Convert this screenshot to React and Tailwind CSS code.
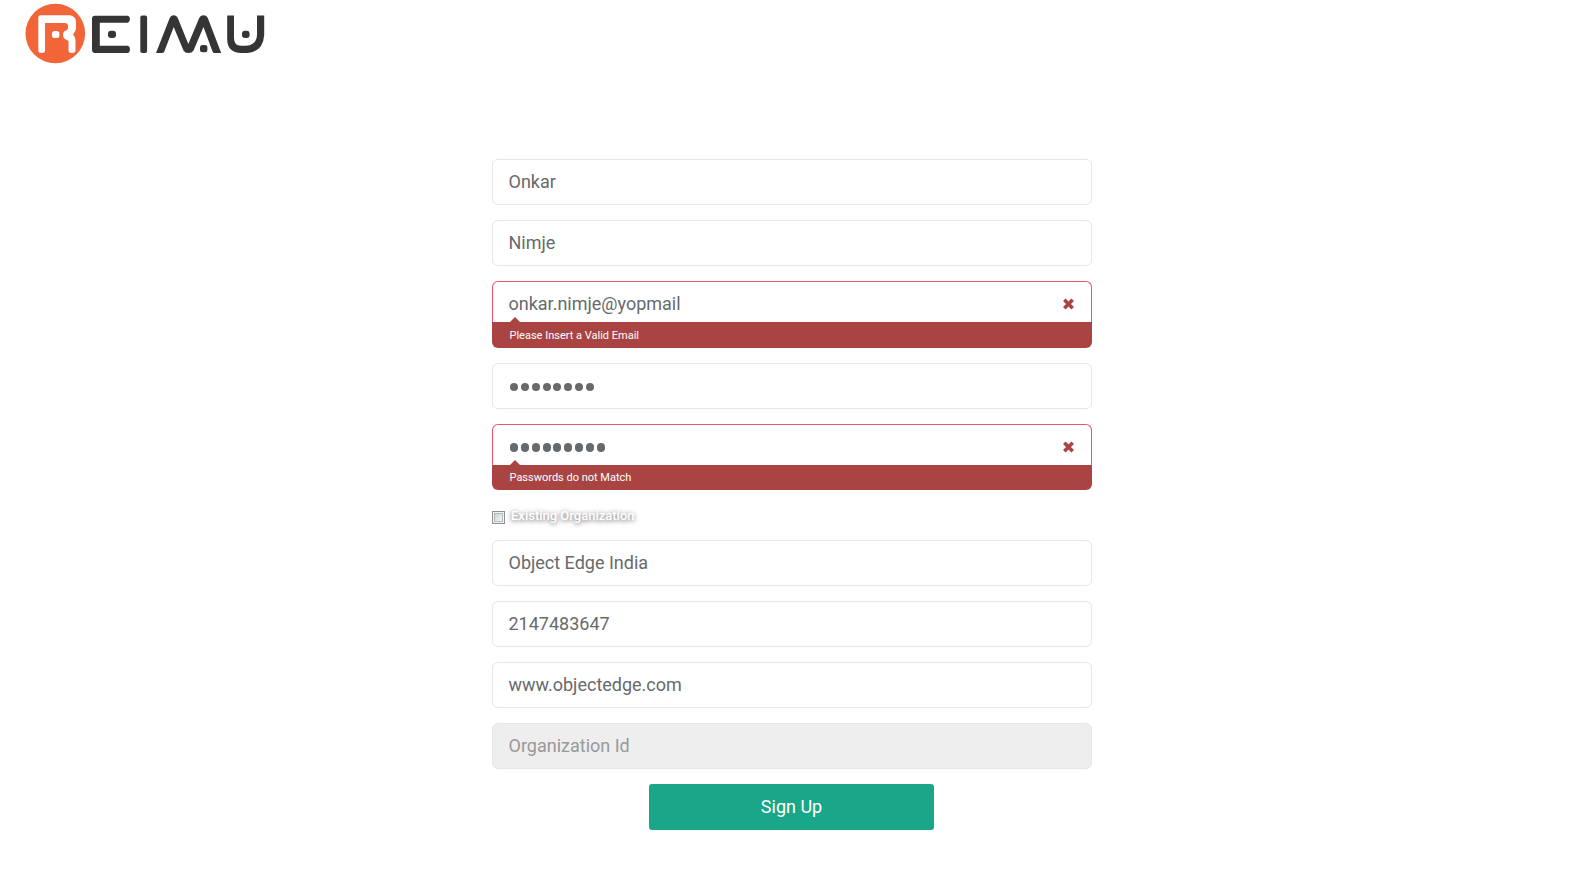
function Field({ children, className = "border-[#e5e6e7] bg-white text-[#676a6c]" }) {
  return (
    <div className={`flex h-[46px] items-center rounded-md border px-[15.5px] text-lg leading-6 ${className}`}>
      {children}
    </div>
  );
}

function Dots({ count }) {
  return (
    <div className="flex gap-[1.85px] pt-[2px] pl-px">
      {Array.from({ length: count }, (_, i) => (
        <span key={i} className="flex w-[9px] justify-center">
          <span className="h-[8.5px] w-[8px] rounded-full bg-[#676a6c]" />
        </span>
      ))}
    </div>
  );
}

function ErrorField({ children, message, className, barClass }) {
  return (
    <div className={`flex flex-col ${className}`}>
      <div className="flex h-[41px] items-center justify-between rounded-t-md border border-b-0 border-[#ed5565] pr-4 pl-[15.5px] text-lg leading-6 text-[#676a6c]">
        <div className="pt-[3px]">{children}</div>
        <svg width="13" height="12" viewBox="0 0 13 12" className="mt-[3px]">
          <path d="M2.300 1.800 10.700 10.200M10.700 1.800 2.300 10.200" stroke="#a94442" strokeWidth="3.600" />
        </svg>
      </div>
      <div className={`relative rounded-b-md bg-[#a94442] pl-[17.5px] text-[11px] text-white ${barClass}`}>
        <svg width="10" height="5" viewBox="0 0 10 5" className="absolute -top-[5px] left-[18px]">
          <path d="M0 5 5 0 10 5Z" fill="#a94442" />
        </svg>
        {message}
      </div>
    </div>
  );
}

function Logo() {
  return (
    <svg width="290" height="70" viewBox="0 0 290 70">
      <circle cx="55.3" cy="33.5" r="29.8" fill="#f26539" />
      <path
        d="M38.300 17.500Q38.300 15.300 40.500 15.300H69Q76 15.800 76 22V28Q76 30.500 73 34.500Q75.500 37 75.500 40V50.500Q75.500 53 72 53Q68.500 53 68.500 50.500V41.500Q68.500 40 66.500 40Q63 38.500 63 34.800Q63 31.500 66.500 30.300Q68 29.500 68 27.500V26Q68 23 64.500 23H45V50.500Q45 53 41.600 53Q38.300 53 38.300 50.500Z"
        fill="#fff"
      />
      <rect x="52" y="31" width="7.400" height="7" rx="2.500" fill="#fff" />
      <g fill="#373435">
        <path d="M95 15.700H128Q130 16.500 130 19T128 22.800H99.800V45.700H128Q130 46.500 130 49.200T128 53H95Q92 52.500 92 50V18.500Q92 16 95 15.700Z" />
        <rect x="140.300" y="15.600" width="6.800" height="37.400" rx="2" />
        <path d="M156 53 169.500 18.500Q171 15.300 173.700 15.300T178 18.500L188.300 44 199 18.500Q200.500 15.300 203.500 15.300T208 18.500L221.200 53H214.500Q213 53 212.500 51.500L203.500 27 193.500 50.500Q192 53 188.500 53T183.500 50.500L173.700 27 164.300 51.500Q163.700 53 162 53Z" />
        <path d="M227.200 15.600H234V38Q234 45.800 241 45.800H246Q257 45 257 34V15.600H264.200V35Q263 52 247 53H240Q227.200 52 227.200 39Z" />
        <rect x="108" y="30.700" width="8" height="7.400" rx="3" />
        <rect x="200" y="45" width="7.400" height="7.200" rx="2.500" />
        <rect x="242" y="30.700" width="7.600" height="7.400" rx="3" />
      </g>
    </svg>
  );
}

export default function App() {
  return (
    <div className="flex h-[890px] flex-col bg-white font-['Roboto',sans-serif]">
      <header className="h-[159px]">
        <Logo />
      </header>
      <main className="ml-[492px] flex w-[600px] flex-col gap-[15px]">
        <Field>Onkar</Field>
        <Field>Nimje</Field>
        <ErrorField message="Please Insert a Valid Email" className="h-[67px]" barClass="h-[26px] leading-[27px]">
          onkar.nimje@yopmail
        </ErrorField>
        <Field><Dots count={8} /></Field>
        <ErrorField message="Passwords do not Match" className="h-[66px]" barClass="h-[25px] leading-[25px]">
          <Dots count={9} />
        </ErrorField>
        <label className="flex h-5 items-center gap-[6px] text-[13px] leading-5 font-medium text-white">
          <span className="mt-[4px] h-[13px] w-[13px] border border-[#8e8f8f] bg-[#f4f4f4] p-px">
            <span className="block h-full w-full border border-[#b4b9be] bg-linear-to-br from-[#cdd2d9] to-[#f6f6f6]" />
          </span>
          <span className="pt-[2px] [text-shadow:0_1px_5px_rgba(0,0,0,0.65)]">Existing Organization</span>
        </label>
        <Field>Object Edge India</Field>
        <Field>2147483647</Field>
        <Field>www.objectedge.com</Field>
        <Field className="border-[#e5e6e7] bg-[#eeeeee] text-[#999999]">Organization Id</Field>
        <button className="ml-[157px] h-[46px] w-[285px] rounded-[3px] bg-[#1aa689] text-lg text-white">Sign Up</button>
      </main>
    </div>
  );
}
